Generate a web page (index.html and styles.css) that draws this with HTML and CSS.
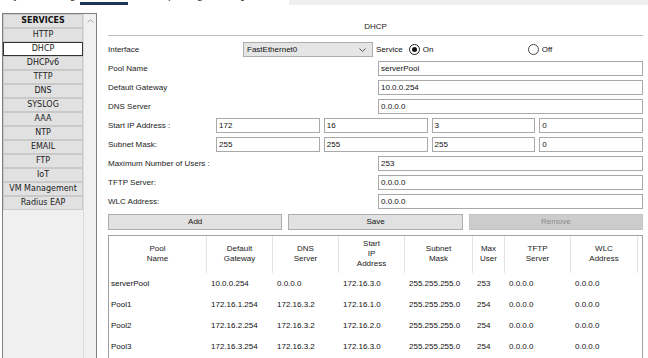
FILE: index.html
```html
<!DOCTYPE html>
<html>
<head>
<meta charset="utf-8">
<link rel="stylesheet" href="styles.css">
</head>
<body>
<div class="tabs">
  <span class="tab t1">Physical</span>
  <span class="tab t2">Config</span>
  <span class="tab t3 active">Services</span>
  <span class="tab t4">Desktop</span>
  <span class="tab t5">Programming</span>
  <span class="tab t6">Attributes</span>
  <span class="tabfill"></span>
</div>
<div class="main">
  <div class="sidebar">
    <div class="svc-list">
      <div class="svc head">SERVICES</div>
      <div class="svc">HTTP</div>
      <div class="svc sel">DHCP</div>
      <div class="svc">DHCPv6</div>
      <div class="svc">TFTP</div>
      <div class="svc">DNS</div>
      <div class="svc">SYSLOG</div>
      <div class="svc">AAA</div>
      <div class="svc">NTP</div>
      <div class="svc">EMAIL</div>
      <div class="svc">FTP</div>
      <div class="svc">IoT</div>
      <div class="svc">VM Management</div>
      <div class="svc">Radius EAP</div>
    </div>
    <div class="scroll">
      <svg class="uparrow" width="7" height="4" viewBox="0 0 7 4"><path d="M0.5 3.5 L3.5 0.5 L6.5 3.5" fill="none" stroke="#a6a6a6" stroke-width="1"/></svg>
    </div>
  </div>
  <div class="panel">
    <div class="title">DHCP</div>
    <div class="rule"></div>
    <div class="form">
      <div class="row">
        <span class="lbl w135">Interface</span>
        <div class="select"><span>FastEthernet0</span><svg width="7" height="4" viewBox="0 0 7 4"><path d="M0.5 0.5 L3.5 3.5 L6.5 0.5" fill="none" stroke="#555" stroke-width="1"/></svg></div>
        <span class="svc-label">Service</span>
        <span class="opt opt-on"><span class="radio on"></span><span>On</span></span>
        <span class="opt"><span class="radio"></span><span>Off</span></span>
      </div>
      <div class="row"><span class="lbl w270">Pool Name</span><span class="field">serverPool</span></div>
      <div class="row"><span class="lbl w270">Default Gateway</span><span class="field">10.0.0.254</span></div>
      <div class="row"><span class="lbl w270">DNS Server</span><span class="field">0.0.0.0</span></div>
      <div class="row"><span class="lbl w108">Start IP Address :</span>
        <div class="quad"><span class="field">172</span><span class="field">16</span><span class="field">3</span><span class="field">0</span></div>
      </div>
      <div class="row"><span class="lbl w108">Subnet Mask:</span>
        <div class="quad"><span class="field">255</span><span class="field">255</span><span class="field">255</span><span class="field">0</span></div>
      </div>
      <div class="row"><span class="lbl w270">Maximum Number of Users :</span><span class="field">253</span></div>
      <div class="row"><span class="lbl w270">TFTP Server:</span><span class="field">0.0.0.0</span></div>
      <div class="row"><span class="lbl w270">WLC Address:</span><span class="field">0.0.0.0</span></div>
    </div>
    <div class="btns">
      <span class="btn">Add</span>
      <span class="btn">Save</span>
      <span class="btn dis">Remove</span>
    </div>
    <div class="tbl-wrap">
      <table class="pools">
        <colgroup>
          <col class="c-pool"><col class="c66"><col class="c66"><col class="c66"><col class="c68"><col class="c32"><col class="c66"><col class="c67"><col class="c-sp">
        </colgroup>
        <thead>
          <tr>
            <th>Pool<br>Name</th>
            <th>Default<br>Gateway</th>
            <th>DNS<br>Server</th>
            <th>Start<br>IP<br>Address</th>
            <th>Subnet<br>Mask</th>
            <th>Max<br>User</th>
            <th>TFTP<br>Server</th>
            <th>WLC<br>Address</th>
            <th class="sp"></th>
          </tr>
        </thead>
        <tbody>
          <tr><td class="first">serverPool</td><td>10.0.0.254</td><td>0.0.0.0</td><td>172.16.3.0</td><td>255.255.255.0</td><td>253</td><td>0.0.0.0</td><td>0.0.0.0</td><td></td></tr>
          <tr><td class="first">Pool1</td><td>172.16.1.254</td><td>172.16.3.2</td><td>172.16.1.0</td><td>255.255.255.0</td><td>254</td><td>0.0.0.0</td><td>0.0.0.0</td><td></td></tr>
          <tr><td class="first">Pool2</td><td>172.16.2.254</td><td>172.16.3.2</td><td>172.16.2.0</td><td>255.255.255.0</td><td>254</td><td>0.0.0.0</td><td>0.0.0.0</td><td></td></tr>
          <tr><td class="first">Pool3</td><td>172.16.3.254</td><td>172.16.3.2</td><td>172.16.3.0</td><td>255.255.255.0</td><td>254</td><td>0.0.0.0</td><td>0.0.0.0</td><td></td></tr>
        </tbody>
      </table>
    </div>
  </div>
</div>
</body>
</html>
```

FILE: styles.css
```css
* { box-sizing: border-box; }
html, body { margin: 0; padding: 0; }
body {
  width: 648px;
  height: 358px;
  overflow: hidden;
  background: #fff;
  color: #111;
  font-family: "Liberation Sans", Arial, sans-serif;
  font-size: 8px;
}

/* tab strip (only the bottom edge is in view) */
.tabs { display: flex; height: 5px; overflow: hidden; }
.tab {
  flex: none;
  height: 16px;
  margin-top: -11px;
  font-size: 11px;
  line-height: 13px;
  text-align: center;
  color: #333;
  white-space: nowrap;
  overflow: hidden;
}
.t1 { width: 40px; }
.t2 { width: 40px; }
.t3 { width: 48px; }
.t4 { width: 52px; }
.t5 { width: 64px; }
.t6 { width: 45px; }
.tab.active { border-bottom: 3px solid #1d3557; }
.tabfill { flex: 1; height: 5px; background: #efefef; }

.main { display: flex; height: 353px; padding-top: 8px; }

/* sidebar */
.sidebar {
  flex: none;
  margin-left: 2px;
  width: 95px;
  display: flex;
  border: 1px solid #7f7f7f;
  border-bottom: none;
  background: #f0f0f0;
}
.svc-list { width: 80px; display: flex; flex-direction: column; }
.svc {
  height: 14px;
  border: 1px solid #c9c9c9;
  background: #e1e1e1;
  font-family: "DejaVu Sans", Verdana, sans-serif;
  font-size: 8px;
  line-height: 12px;
  text-align: center;
  color: #222;
  white-space: nowrap;
}
.svc.head { font-weight: bold; color: #111; }
.svc.sel { background: #fff; border-color: #333; }
.scroll {
  flex: 1;
  border-left: 1px solid #dadada;
  background: #f0f0f0;
  display: flex;
  justify-content: center;
  padding-top: 5px;
}
.uparrow { display: block; }

/* content panel */
.panel {
  flex: 1;
  padding: 9px 5px 0 11px;
  display: flex;
  flex-direction: column;
  overflow: hidden;
  background: #fff;
}
.title { height: 10px; line-height: 10px; text-align: center; color: #222; }
.rule { margin-top: 3px; height: 1px; background: #bdbdbd; }
.form { margin-top: 6px; display: flex; flex-direction: column; gap: 4px; }
.row { display: flex; align-items: center; height: 15px; }
.lbl { flex: none; color: #1a1a1a; white-space: nowrap; }
.w135 { width: 135px; }
.w270 { width: 270px; }
.w108 { width: 108px; }
.field {
  flex: 1;
  height: 15px;
  border: 1px solid #a9a9a9;
  background: #fff;
  padding-left: 2px;
  line-height: 13px;
  color: #111;
  white-space: nowrap;
}
.quad { flex: 1; display: flex; gap: 4px; }

.select {
  flex: none;
  width: 130px;
  height: 15px;
  background: #e5e5e5;
  border: 1px solid #adadad;
  display: flex;
  align-items: center;
  justify-content: space-between;
  padding: 0 6px 0 3px;
}
.svc-label { margin-left: 3px; }
.opt { display: flex; align-items: center; gap: 3px; }
.opt-on { margin-left: 6px; width: 119px; }
.radio {
  width: 11px;
  height: 11px;
  border-radius: 50%;
  border: 1px solid #444;
  background: #fff;
  display: flex;
  align-items: center;
  justify-content: center;
}
.radio.on { border-color: #222; }
.radio.on::after {
  content: "";
  width: 5px;
  height: 5px;
  border-radius: 50%;
  background: #111;
}

.btns { margin-top: 5px; display: flex; gap: 6px; }
.btn {
  flex: 1;
  height: 16px;
  border: 1px solid #adadad;
  background: #e1e1e1;
  text-align: center;
  line-height: 14px;
  color: #111;
}
.btn.dis { background: #cccccc; border-color: #c4c4c4; color: #8a8a8a; }

.tbl-wrap {
  margin-top: 5px;
  flex: 1;
  border: 1px solid #a0a0a0;
  border-bottom: none;
  overflow: hidden;
}
.pools {
  border-collapse: separate;
  border-spacing: 0;
  table-layout: fixed;
  width: 533px;
}
.c-pool { width: 98px; }
.c66 { width: 66px; }
.c68 { width: 68px; }
.c32 { width: 32px; }
.c67 { width: 67px; }
.c-sp { width: 4px; }
.pools th {
  height: 37px;
  padding: 0 0 2px 0;
  font-weight: normal;
  line-height: 10px;
  text-align: center;
  vertical-align: middle;
  border-right: 1px solid #e4e4e4;
  color: #1a1a1a;
}
.pools th.sp { border-right: none; }
.pools td {
  height: 21px;
  padding: 0 0 0 4px;
  white-space: nowrap;
  overflow: hidden;
  color: #111;
}
.pools td.first { padding-left: 2px; }
```
